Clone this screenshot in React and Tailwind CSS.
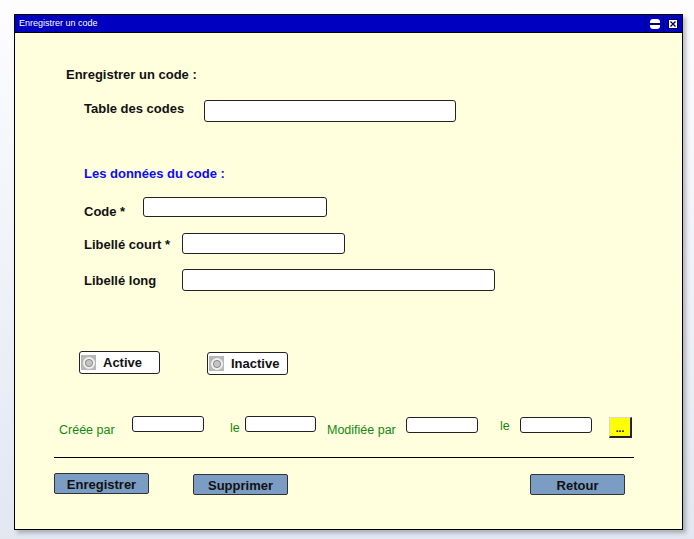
import React from 'react';

const font = "font-['Liberation_Sans',Arial,sans-serif]";

const Field = ({ className }) => (
  <div className={`rounded-[3px] border border-[#222] bg-white ${className}`} />
);

const RadioBox = ({ label, className }) => (
  <div className={`flex h-[23px] w-[81px] items-center rounded-[3px] border border-[#222] bg-white ${className}`}>
    <div className="ml-[1px] flex h-[15px] w-[15px] items-center justify-center bg-[#b8b8b8]">
      <div className="h-[12px] w-[12px] rounded-full border-2 border-[#f0f0f0] bg-[#c4c4c4] shadow-[inset_0_0_0_1px_#8a8a8a]" />
    </div>
    <span className="ml-[7px] mt-[1px] text-[13px] font-bold text-[#111]">{label}</span>
  </div>
);

const ActionButton = ({ label, className }) => (
  <button
    type="button"
    className={`h-[21px] w-[95px] rounded-[2px] border border-[#333] bg-[#7b9dc3] pt-[1px] text-[13px] font-bold leading-none text-[#111] ${className}`}
  >
    {label}
  </button>
);

export default function App() {
  return (
    <div className={`h-[539px] w-[694px] overflow-hidden bg-gradient-to-b from-[#fdfdfe] to-[#e2e7f1] pt-[14px] pl-[14px] ${font}`}>
      <div className="flex h-[516px] w-[669px] flex-col border border-black bg-[#ffffdd] shadow-[3px_3px_4px_rgba(0,0,0,0.25)]">
        {/* title bar */}
        <div className="flex h-[18px] shrink-0 items-center border-b border-black bg-[#0000c0]">
          <span className="ml-[4px] flex-1 text-[9px] leading-none text-white">Enregistrer un code</span>
          <div className="flex h-full w-[18px] items-center justify-center border-l border-[#000060]">
            <div className="flex h-[10px] w-[10px] items-center rounded-[3px] bg-white">
              <div className="h-[2px] w-full bg-[#000060]" />
            </div>
          </div>
          <div className="flex h-full w-[19px] items-center justify-center border-l border-[#000060]">
            <svg width="10" height="10" viewBox="0 0 10 10">
              <rect x="0.5" y="0.5" width="9" height="9" fill="white" stroke="#000040" />
              <path d="M2.5 2.5 L7.5 7.5 M7.5 2.5 L2.5 7.5" stroke="#000040" strokeWidth="1.3" />
            </svg>
          </div>
        </div>

        {/* body */}
        <div className="flex flex-col text-[13px] leading-[16px] text-[#111]">
          <div className="ml-[51px] mt-[34px] font-bold">Enregistrer un code :</div>

          <div className="ml-[69px] mt-[17px] flex h-[22px] items-start">
            <span className="mt-[1px] w-[120px] font-bold">Table des codes</span>
            <Field className="h-[22px] w-[252px]" />
          </div>

          <div className="ml-[69px] mt-[44px] font-bold text-[#0a0aff]">Les données du code :</div>

          <div className="ml-[69px] mt-[15px] flex h-[20px] items-start">
            <span className="mt-[7px] w-[59px] font-bold">Code *</span>
            <Field className="h-[20px] w-[184px]" />
          </div>

          <div className="ml-[69px] mt-[16px] flex h-[21px] items-start">
            <span className="mt-[4px] w-[98px] font-bold">Libellé court *</span>
            <Field className="h-[21px] w-[163px]" />
          </div>

          <div className="ml-[69px] mt-[15px] flex h-[22px] items-start">
            <span className="mt-[4px] w-[98px] font-bold">Libellé long</span>
            <Field className="h-[22px] w-[313px]" />
          </div>

          <div className="ml-[64px] mt-[60px] flex h-[24px] items-start">
            <RadioBox label="Active" />
            <RadioBox label="Inactive" className="ml-[47px] mt-[1px]" />
          </div>

          <div className="ml-[44px] mt-[41px] flex h-[22px] items-start text-[12.5px] text-[#128812]">
            <span className="mt-[6px] w-[73px]">Créée par</span>
            <Field className="h-[16px] w-[72px]" />
            <span className="ml-[26px] mt-[4px] w-[15px]">le</span>
            <Field className="h-[16px] w-[71px]" />
            <span className="ml-[11px] mt-[6px] w-[79px]">Modifiée par</span>
            <Field className="mt-[1px] h-[16px] w-[72px]" />
            <span className="ml-[22px] mt-[2px] w-[20px]">le</span>
            <Field className="mt-[1px] h-[16px] w-[72px]" />
            <div className="ml-[17px] mt-[1px] flex h-[21px] w-[23px] items-end justify-center border-t border-l border-t-[#d8d8d8] border-l-[#d8d8d8] border-b-2 border-r-2 border-b-[#222] border-r-[#222] bg-[#ffff00] pb-[2px] text-[10px] font-bold leading-none text-black">
              ...
            </div>
          </div>

          <div className="ml-[39px] mt-[19px] h-px w-[580px] bg-black" />

          <div className="ml-[39px] mt-[15px] flex items-start">
            <ActionButton label="Enregistrer" />
            <ActionButton label="Supprimer" className="ml-[44px] mt-[1px]" />
            <ActionButton label="Retour" className="ml-[242px] mt-[1px]" />
          </div>
        </div>
      </div>
    </div>
  );
}
